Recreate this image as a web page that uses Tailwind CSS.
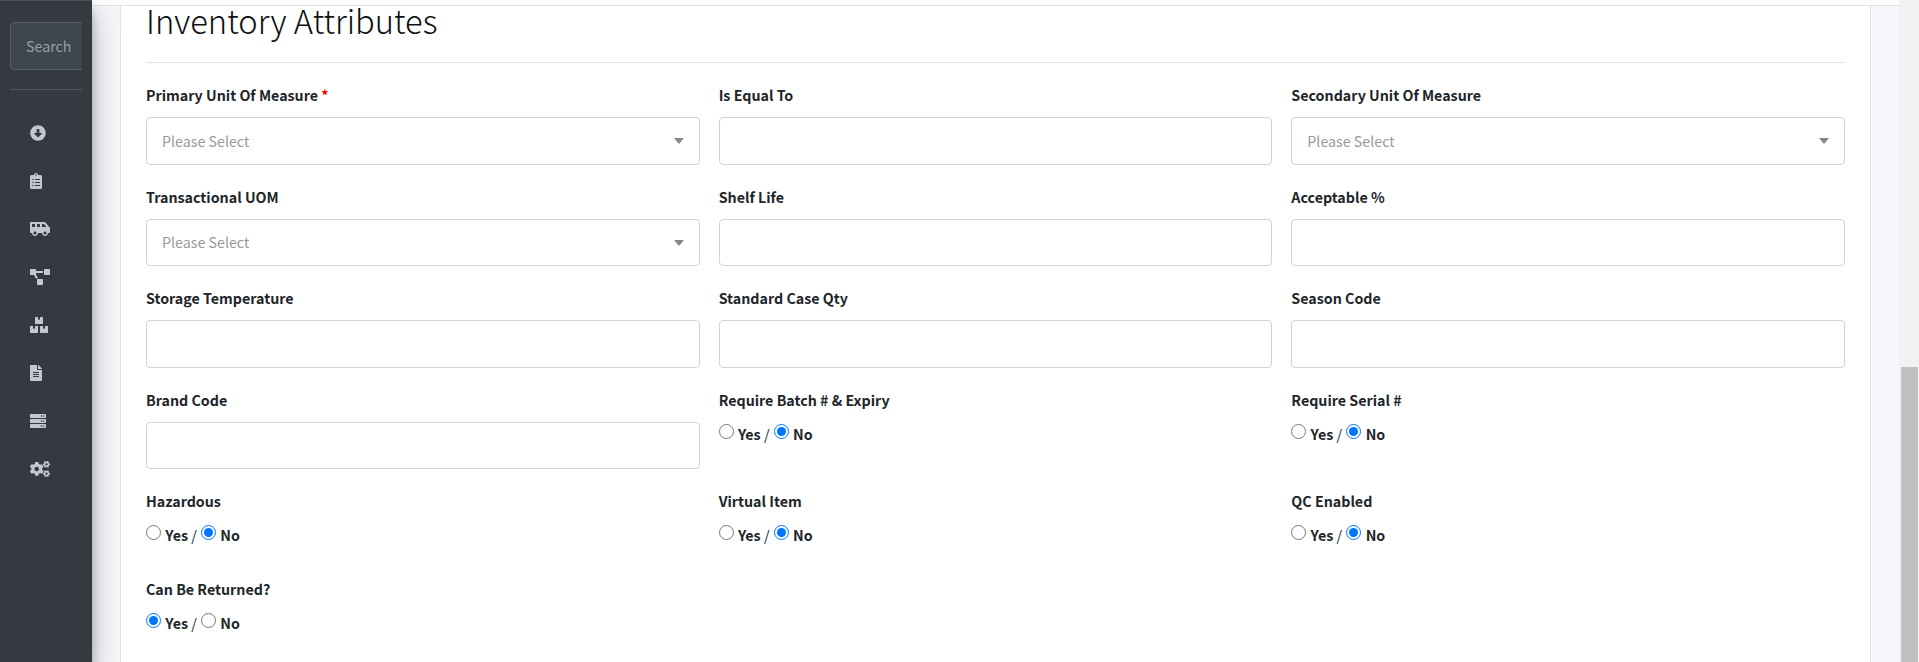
<!DOCTYPE html>
<html lang="en">
  <head>
    <meta charset="UTF-8" />
    <title>Inventory Attributes</title>
    <script src="https://cdn.jsdelivr.net/npm/@tailwindcss/browser@4"></script>
  </head>
  <body class="bg-[#f4f6f9] text-[#212529] font-['Noto_Sans_CJK_SC','Noto_Sans',sans-serif] overflow-hidden">
    <div class="flex h-[662px] w-[1919px] overflow-hidden">
      <!-- Sidebar -->
      <aside class="relative z-10 w-[92px] shrink-0 bg-[#343a40] border-t border-[#4b5157] shadow-[0_14px_28px_rgba(0,0,0,0.25),0_10px_10px_rgba(0,0,0,0.22)]">
        <div class="mx-[10px] mt-[21px] overflow-hidden">
          <div class="w-[100px] h-[48px] pl-[15px] flex items-center bg-[#3f474e] border border-[#56606a] rounded-[4px] text-[14.25px] text-[#9a9fa4]">Search</div>
        </div>
        <div class="mx-[10px] mt-[19px] border-t border-[#4f5962]"></div>
        <nav class="flex flex-col gap-[32px] mt-[35px] pl-[30px] text-[#c2c7d0]">
          <svg class="h-4 block self-start" viewBox="0 0 512 512" fill="currentColor"><path d="M504 256c0 137-111 248-248 248S8 393 8 256 119 8 256 8s248 111 248 248zM212 140v116h-70.9c-10.7 0-16.1 13-8.5 20.5l114.9 114.3c4.7 4.7 12.2 4.7 16.9 0l114.9-114.3c7.6-7.6 2.2-20.5-8.5-20.5H300V140c0-6.6-5.4-12-12-12h-64c-6.6 0-12 5.4-12 12z"/></svg>
          <svg class="h-4 block self-start" viewBox="0 0 384 512" fill="currentColor"><path d="M336 64h-80c0-35.3-28.7-64-64-64s-64 28.7-64 64H48C21.5 64 0 85.5 0 112v352c0 26.5 21.5 48 48 48h288c26.5 0 48-21.5 48-48V112c0-26.5-21.5-48-48-48zM96 424c-13.3 0-24-10.7-24-24s10.7-24 24-24 24 10.7 24 24-10.7 24-24 24zm0-96c-13.3 0-24-10.7-24-24s10.7-24 24-24 24 10.7 24 24-10.7 24-24 24zm0-96c-13.3 0-24-10.7-24-24s10.7-24 24-24 24 10.7 24 24-10.7 24-24 24zm96-192c13.3 0 24 10.7 24 24s-10.7 24-24 24-24-10.7-24-24 10.7-24 24-24zm128 368c0 4.4-3.6 8-8 8H168c-4.4 0-8-3.6-8-8v-16c0-4.4 3.6-8 8-8h144c4.4 0 8 3.6 8 8v16zm0-96c0 4.4-3.6 8-8 8H168c-4.4 0-8-3.6-8-8v-16c0-4.4 3.6-8 8-8h144c4.4 0 8 3.6 8 8v16zm0-96c0 4.4-3.6 8-8 8H168c-4.4 0-8-3.6-8-8v-16c0-4.4 3.6-8 8-8h144c4.4 0 8 3.6 8 8v16z"/></svg>
          <svg class="h-4 block self-start" viewBox="0 0 640 512" fill="currentColor"><path d="M628.88 210.65L494.39 49.27A48.01 48.01 0 0 0 457.52 32H32C14.33 32 0 46.33 0 64v288c0 17.67 14.33 32 32 32h32c0 53.02 42.98 96 96 96s96-42.98 96-96h128c0 53.02 42.98 96 96 96s96-42.98 96-96h32c17.67 0 32-14.33 32-32V241.38c0-11.23-3.94-22.1-11.12-30.73zM64 192V96h96v96H64zm96 240c-26.51 0-48-21.49-48-48s21.49-48 48-48 48 21.49 48 48-21.49 48-48 48zm160-240h-96V96h96v96zm160 240c-26.51 0-48-21.49-48-48s21.49-48 48-48 48 21.49 48 48-21.49 48-48 48zm-96-240V96h66.02l80 96H384z"/></svg>
          <svg class="h-4 block self-start" viewBox="0 0 640 512" fill="currentColor"><path d="M384 320H256c-17.67 0-32 14.33-32 32v128c0 17.67 14.33 32 32 32h128c17.67 0 32-14.33 32-32V352c0-17.67-14.33-32-32-32zM192 32c0-17.67-14.33-32-32-32H32C14.33 0 0 14.33 0 32v128c0 17.67 14.33 32 32 32h95.72l73.16 128.04C211.98 300.98 232.4 288 256 288h.28L192 175.51V128h224V64H192V32zM608 0H480c-17.67 0-32 14.33-32 32v128c0 17.67 14.33 32 32 32h128c17.67 0 32-14.33 32-32V32c0-17.67-14.33-32-32-32z"/></svg>
          <svg class="h-4 block self-start" viewBox="0 0 576 512" fill="currentColor"><path d="M560 288h-80v96l-32-21.3-32 21.3v-96h-80c-8.8 0-16 7.2-16 16v192c0 8.8 7.2 16 16 16h224c8.8 0 16-7.2 16-16V304c0-8.8-7.2-16-16-16zm-384-64h224c8.8 0 16-7.2 16-16V16c0-8.8-7.2-16-16-16h-80v96l-32-21.3L256 96V0h-80c-8.8 0-16 7.2-16 16v192c0 8.8 7.2 16 16 16zm64 64h-80v96l-32-21.3L96 384v-96H16c-8.8 0-16 7.2-16 16v192c0 8.8 7.2 16 16 16h224c8.8 0 16-7.2 16-16V304c0-8.8-7.2-16-16-16z"/></svg>
          <svg class="h-4 block self-start" viewBox="0 0 384 512" fill="currentColor"><path d="M224 136V0H24C10.7 0 0 10.7 0 24v464c0 13.3 10.7 24 24 24h336c13.3 0 24-10.7 24-24V160H248c-13.2 0-24-10.8-24-24zm64 236c0 6.6-5.4 12-12 12H108c-6.6 0-12-5.4-12-12v-8c0-6.6 5.4-12 12-12h168c6.6 0 12 5.4 12 12v8zm0-64c0 6.6-5.4 12-12 12H108c-6.6 0-12-5.4-12-12v-8c0-6.6 5.4-12 12-12h168c6.6 0 12 5.4 12 12v8zm0-72v8c0 6.6-5.4 12-12 12H108c-6.6 0-12-5.4-12-12v-8c0-6.6 5.4-12 12-12h168c6.6 0 12 5.4 12 12zm96-114.1v6.1H256V0h6.1c6.4 0 12.5 2.5 17 7l97.9 98c4.5 4.5 7 10.6 7 16.9z"/></svg>
          <svg class="h-4 block self-start" viewBox="0 0 512 512" fill="currentColor"><path d="M480 160H32c-17.673 0-32-14.327-32-32V64c0-17.673 14.327-32 32-32h448c17.673 0 32 14.327 32 32v64c0 17.673-14.327 32-32 32zm-48-88c-13.255 0-24 10.745-24 24s10.745 24 24 24 24-10.745 24-24-10.745-24-24-24zm-64 0c-13.255 0-24 10.745-24 24s10.745 24 24 24 24-10.745 24-24-10.745-24-24-24zm112 248H32c-17.673 0-32-14.327-32-32v-64c0-17.673 14.327-32 32-32h448c17.673 0 32 14.327 32 32v64c0 17.673-14.327 32-32 32zm-48-88c-13.255 0-24 10.745-24 24s10.745 24 24 24 24-10.745 24-24-10.745-24-24-24zm-64 0c-13.255 0-24 10.745-24 24s10.745 24 24 24 24-10.745 24-24-10.745-24-24-24zm112 248H32c-17.673 0-32-14.327-32-32v-64c0-17.673 14.327-32 32-32h448c17.673 0 32 14.327 32 32v64c0 17.673-14.327 32-32 32zm-48-88c-13.255 0-24 10.745-24 24s10.745 24 24 24 24-10.745 24-24-10.745-24-24-24zm-64 0c-13.255 0-24 10.745-24 24s10.745 24 24 24 24-10.745 24-24-10.745-24-24-24z"/></svg>
          <svg class="h-4 block self-start" viewBox="0 0 640 512" fill="currentColor"><path d="M512.1 191l-8.2 14.3c-3 5.3-9.4 7.5-15.1 5.4-11.8-4.4-22.6-10.7-32.1-18.6-4.6-3.8-5.8-10.5-2.8-15.7l8.2-14.3c-6.9-8-12.3-17.3-15.9-27.4h-16.5c-6 0-11.2-4.3-12.2-10.3-2-12-2.1-24.6 0-37.1 1-6 6.2-10.4 12.2-10.4h16.5c3.6-10.1 9-19.4 15.9-27.4l-8.2-14.3c-3-5.2-1.9-11.9 2.8-15.7 9.5-7.9 20.4-14.2 32.1-18.6 5.7-2.1 12.1.1 15.1 5.4l8.2 14.3c10.5-1.9 21.2-1.9 31.7 0L552 6.3c3-5.3 9.4-7.5 15.1-5.4 11.8 4.4 22.6 10.7 32.1 18.6 4.6 3.8 5.8 10.5 2.8 15.7l-8.2 14.3c6.9 8 12.3 17.3 15.9 27.4h16.5c6 0 11.2 4.3 12.2 10.3 2 12 2.1 24.6 0 37.1-1 6-6.2 10.4-12.2 10.4h-16.5c-3.6 10.1-9 19.4-15.9 27.4l8.2 14.3c3 5.2 1.9 11.9-2.8 15.7-9.5 7.9-20.4 14.2-32.1 18.6-5.7 2.1-12.1-.1-15.1-5.4l-8.2-14.3c-10.4 1.9-21.2 1.9-31.7 0zm-10.5-58.8c38.5 29.6 82.4-14.3 52.8-52.8-38.5-29.7-82.4 14.3-52.8 52.8zM386.3 286.1l33.7 16.8c10.1 5.8 14.5 18.1 10.5 29.1-8.9 24.2-26.4 46.4-42.6 65.8-7.4 8.9-20.2 11.1-30.3 5.3l-29.1-16.8c-16 13.7-34.6 24.6-54.9 31.7v33.6c0 11.6-8.3 21.6-19.7 23.6-24.6 4.2-50.4 4.4-75.9 0-11.5-2-20-11.9-20-23.6V418c-20.3-7.2-38.9-18-54.9-31.7L74 403c-10 5.8-22.9 3.6-30.3-5.3-16.2-19.4-33.3-41.6-42.2-65.7-4-10.9.4-23.2 10.5-29.1l33.3-16.8c-3.9-20.9-3.9-42.4 0-63.4L12 205.8c-10.1-5.8-14.6-18.1-10.5-29 8.9-24.2 26-46.4 42.2-65.8 7.4-8.9 20.2-11.1 30.3-5.3l29.1 16.8c16-13.7 34.6-24.6 54.9-31.7V57.1c0-11.5 8.2-21.5 19.6-23.5 24.6-4.2 50.5-4.4 76-.1 11.5 2 20 11.9 20 23.6v33.6c20.3 7.2 38.9 18 54.9 31.7l29.1-16.8c10-5.8 22.9-3.6 30.3 5.3 16.2 19.4 33.2 41.6 42.1 65.8 4 10.9.1 23.2-10 29.1l-33.7 16.8c3.9 21 3.9 42.5 0 63.5zm-117.6 21.1c59.2-77-28.7-164.9-105.7-105.7-59.2 77 28.7 164.9 105.7 105.7zm243.4 182.7l-8.2 14.3c-3 5.3-9.4 7.5-15.1 5.4-11.8-4.4-22.6-10.7-32.1-18.6-4.6-3.8-5.8-10.5-2.8-15.7l8.2-14.3c-6.9-8-12.3-17.3-15.9-27.4h-16.5c-6 0-11.2-4.3-12.2-10.3-2-12-2.1-24.6 0-37.1 1-6 6.2-10.4 12.2-10.4h16.5c3.6-10.1 9-19.4 15.9-27.4l-8.2-14.3c-3-5.2-1.9-11.9 2.8-15.7 9.5-7.9 20.4-14.2 32.1-18.6 5.7-2.1 12.1.1 15.1 5.4l8.2 14.3c10.5-1.9 21.2-1.9 31.7 0l8.2-14.3c3-5.3 9.4-7.5 15.1-5.4 11.8 4.4 22.6 10.7 32.1 18.6 4.6 3.8 5.8 10.5 2.8 15.7l-8.2 14.3c6.9 8 12.3 17.3 15.9 27.4h16.5c6 0 11.2 4.3 12.2 10.3 2 12 2.1 24.6 0 37.1-1 6-6.2 10.4-12.2 10.4h-16.5c-3.6 10.1-9 19.4-15.9 27.4l8.2 14.3c3 5.2 1.9 11.9-2.8 15.7-9.5 7.9-20.4 14.2-32.1 18.6-5.7 2.1-12.1-.1-15.1-5.4l-8.2-14.3c-10.4 1.9-21.2 1.9-31.7 0zM501.6 431c38.5 29.6 82.4-14.3 52.8-52.8-38.5-29.6-82.4 14.3-52.8 52.8z"/></svg>
        </nav>
      </aside>

      <!-- Content -->
      <main class="flex-1 min-w-0 flex flex-col">
        <div class="h-[6px] shrink-0 bg-white border-b border-[#dee2e6]"></div>
        <div class="flex-1 mx-[28px] bg-white border-x border-[#e1e3e8] px-[25px]">
          <div class="flex h-[57px] border-b border-[#e2e4e7]">
            <h1 class="-mt-[5px] h-[38px] text-[32.7px] leading-[38px] font-light text-[#0d0f11]">Inventory Attributes</h1>
          </div>

          <div class="grid grid-cols-3 gap-x-[19px] mt-[20px] font-bold text-[14.25px] leading-[24px]">
            <!-- row 1 -->
            <div class="h-[101.5px]">
              <label class="block mb-[10px]">Primary Unit Of Measure <span class="text-[#ff0000]">*</span></label>
              <div class="relative h-[47.5px] border border-[#ced4da] rounded-[4px] pl-[15px] flex items-center font-normal text-[#999999]">Please Select<span class="absolute right-[15px] top-[20px] w-0 h-0 border-x-[5px] border-x-transparent border-t-[6px] border-t-[#888888]"></span></div>
            </div>
            <div class="h-[101.5px]">
              <label class="block mb-[10px]">Is Equal To</label>
              <input type="text" class="block w-full h-[47.5px] border border-[#ced4da] rounded-[4px]" />
            </div>
            <div class="h-[101.5px]">
              <label class="block mb-[10px]">Secondary Unit Of Measure</label>
              <div class="relative h-[47.5px] border border-[#ced4da] rounded-[4px] pl-[15px] flex items-center font-normal text-[#999999]">Please Select<span class="absolute right-[15px] top-[20px] w-0 h-0 border-x-[5px] border-x-transparent border-t-[6px] border-t-[#888888]"></span></div>
            </div>
            <!-- row 2 -->
            <div class="h-[101.5px]">
              <label class="block mb-[10px]">Transactional UOM</label>
              <div class="relative h-[47.5px] border border-[#ced4da] rounded-[4px] pl-[15px] flex items-center font-normal text-[#999999]">Please Select<span class="absolute right-[15px] top-[20px] w-0 h-0 border-x-[5px] border-x-transparent border-t-[6px] border-t-[#888888]"></span></div>
            </div>
            <div class="h-[101.5px]">
              <label class="block mb-[10px]">Shelf Life</label>
              <input type="text" class="block w-full h-[47.5px] border border-[#ced4da] rounded-[4px]" />
            </div>
            <div class="h-[101.5px]">
              <label class="block mb-[10px]">Acceptable %</label>
              <input type="text" class="block w-full h-[47.5px] border border-[#ced4da] rounded-[4px]" />
            </div>
            <!-- row 3 -->
            <div class="h-[101.5px]">
              <label class="block mb-[10px]">Storage Temperature</label>
              <input type="text" class="block w-full h-[47.5px] border border-[#ced4da] rounded-[4px]" />
            </div>
            <div class="h-[101.5px]">
              <label class="block mb-[10px]">Standard Case Qty</label>
              <input type="text" class="block w-full h-[47.5px] border border-[#ced4da] rounded-[4px]" />
            </div>
            <div class="h-[101.5px]">
              <label class="block mb-[10px]">Season Code</label>
              <input type="text" class="block w-full h-[47.5px] border border-[#ced4da] rounded-[4px]" />
            </div>
            <!-- row 4 -->
            <div class="h-[101.5px]">
              <label class="block mb-[10px]">Brand Code</label>
              <input type="text" class="block w-full h-[47.5px] border border-[#ced4da] rounded-[4px]" />
            </div>
            <div class="h-[101.5px]">
              <label class="block mb-[10px]">Require Batch # &amp; Expiry</label>
              <div class="leading-[24px]"><input type="radio" name="batch" class="ml-0 mr-[1px] size-[15px] align-[1px]" /> Yes <span class="font-normal">/</span> <input type="radio" name="batch" class="mx-[1px] size-[15px] align-[1px]" checked /> No</div>
            </div>
            <div class="h-[101.5px]">
              <label class="block mb-[10px]">Require Serial #</label>
              <div class="leading-[24px]"><input type="radio" name="serial" class="ml-0 mr-[1px] size-[15px] align-[1px]" /> Yes <span class="font-normal">/</span> <input type="radio" name="serial" class="mx-[1px] size-[15px] align-[1px]" checked /> No</div>
            </div>
            <!-- row 5 -->
            <div class="h-[87.5px]">
              <label class="block mb-[10px]">Hazardous</label>
              <div class="leading-[24px]"><input type="radio" name="haz" class="ml-0 mr-[1px] size-[15px] align-[1px]" /> Yes <span class="font-normal">/</span> <input type="radio" name="haz" class="mx-[1px] size-[15px] align-[1px]" checked /> No</div>
            </div>
            <div class="h-[87.5px]">
              <label class="block mb-[10px]">Virtual Item</label>
              <div class="leading-[24px]"><input type="radio" name="virtual" class="ml-0 mr-[1px] size-[15px] align-[1px]" /> Yes <span class="font-normal">/</span> <input type="radio" name="virtual" class="mx-[1px] size-[15px] align-[1px]" checked /> No</div>
            </div>
            <div class="h-[87.5px]">
              <label class="block mb-[10px]">QC Enabled</label>
              <div class="leading-[24px]"><input type="radio" name="qc" class="ml-0 mr-[1px] size-[15px] align-[1px]" /> Yes <span class="font-normal">/</span> <input type="radio" name="qc" class="mx-[1px] size-[15px] align-[1px]" checked /> No</div>
            </div>
            <!-- row 6 -->
            <div>
              <label class="block mb-[10px]">Can Be Returned?</label>
              <div class="leading-[24px]"><input type="radio" name="ret" class="ml-0 mr-[1px] size-[15px] align-[1px]" checked /> Yes <span class="font-normal">/</span> <input type="radio" name="ret" class="mx-[1px] size-[15px] align-[1px]" /> No</div>
            </div>
          </div>
        </div>
      </main>

      <!-- Page scrollbar -->
      <div class="w-[20px] shrink-0 bg-[#f1f1f1] pl-[2px] pr-[1px] pt-[367px]">
        <div class="h-full bg-[#c1c1c1]"></div>
      </div>
    </div>
  </body>
</html>
